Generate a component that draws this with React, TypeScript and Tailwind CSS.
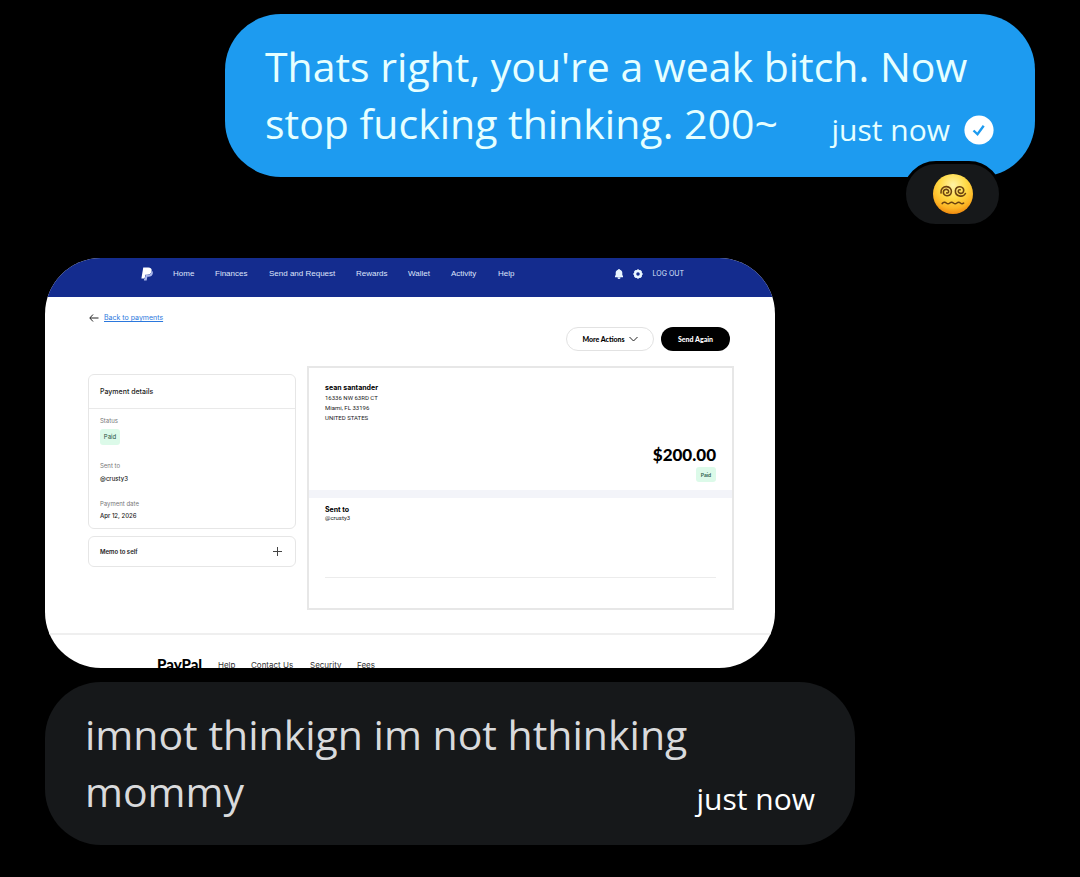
import React from "react";

const navItems = [
  { label: "Home", width: "w-[42px]" },
  { label: "Finances", width: "w-[54px]" },
  { label: "Send and Request", width: "w-[87px]" },
  { label: "Rewards", width: "w-[52px]" },
  { label: "Wallet", width: "w-[43px]" },
  { label: "Activity", width: "w-[47px]" },
  { label: "Help", width: "w-[18px]" },
];

const footerItems = [
  { label: "Help", width: "w-[33px]" },
  { label: "Contact Us", width: "w-[59px]" },
  { label: "Security", width: "w-[47px]" },
  { label: "Fees", width: "w-[30px]" },
];

function DizzyFace() {
  return (
    <svg viewBox="0 0 40 40" className="h-10 w-10" role="img" aria-label="Face with spiral eyes">
      <defs>
        <radialGradient id="face" cx="50%" cy="28%" r="72%">
          <stop offset="0" stopColor="#fff3a6" />
          <stop offset="0.45" stopColor="#ffdb48" />
          <stop offset="0.8" stopColor="#fdb524" />
          <stop offset="1" stopColor="#ef8a10" />
        </radialGradient>
      </defs>
      <circle cx="20" cy="20" r="20" fill="url(#face)" />
      <g fill="none" stroke="#6b4210" strokeWidth="1.6" strokeLinecap="round">
        <path d="M8 19c-.6-4 2.400-6.600 5.600-6.400 3 .2 5 2.600 4.800 5.200-.2 2.600-2.200 4.200-4.600 4-2.200-.2-3.600-1.800-3.400-3.800.2-1.800 1.600-2.800 3.200-2.600 1.400.2 2.200 1.200 2 2.400-.2 1-1 1.400-1.900 1.100" />
        <path d="M32.400 19.500c-1 2-3.200 2.800-5.200 2.600-3-.4-5-2.600-4.800-5.400.2-2.600 2.200-4.200 4.600-4 2.400.2 3.900 1.800 3.700 3.900-.2 1.900-1.700 3-3.300 2.800-1.400-.2-2.300-1.200-2.100-2.400.2-1 1-1.500 1.900-1.200" />
        <path d="M9.200 29.600c1.200-1.600 2.900-1.600 4.100-.6s2.300 1 3.500 0 2.400-1 3.600 0 2.300 1 3.500 0 2.300-1 3.500 0 2 1 3.200.2" />
      </g>
    </svg>
  );
}

function VerifiedCheck() {
  return (
    <svg viewBox="0 0 30 30" className="h-[30px] w-[30px]" role="img" aria-label="Seen">
      <circle cx="15" cy="15" r="14.600" fill="#fff" />
      <path d="M9.500 15.500l4 3.800 6.200-8.500" fill="none" stroke="#1d9bf0" strokeWidth="2.400" />
    </svg>
  );
}

function PaypalMark() {
  return (
    <svg viewBox="0 0 24 28" className="h-[14px] w-3" aria-hidden="true">
      <path d="M4.500 1h10c5 0 7.500 2.800 6.800 7.200-.8 5-4.300 7.400-9.300 7.400H8.700L7.200 23H.8z" fill="#fff" />
      <path d="M21.500 7c2 1.300 2.600 3.300 2.100 6-.9 4.400-4 6.600-8.500 6.600h-2.400L11.300 27H5.800l.6-3.600h1.300l1.600-7.300H12c5.300 0 8.800-3 9.500-9.100z" fill="#a9b6ea" />
    </svg>
  );
}

function BellIcon() {
  return (
    <svg viewBox="0 0 16 20" className="h-[10px] w-2" fill="#e9f6ff" aria-hidden="true">
      <path d="M8 0a2 2 0 0 1 2 1.600c3 .8 4.600 3.200 4.600 6v4.200L16 14v2.500H0V14l1.400-2.200V7.600c0-2.800 1.600-5.200 4.600-6A2 2 0 0 1 8 0zM5 17h6a3 3 0 0 1-6 0z" />
    </svg>
  );
}

function GearIcon() {
  return (
    <svg viewBox="0 0 20 20" className="h-[10px] w-[10px]" aria-hidden="true">
      <circle cx="10" cy="10" r="6" fill="none" stroke="#e9f6ff" strokeWidth="5" />
      <path d="M10 1v3M10 16v3M1 10h3M16 10h3M3.500 3.500l2 2M14.500 14.500l2 2M16.500 3.500l-2 2M3.500 16.500l2-2" stroke="#e9f6ff" strokeWidth="4" />
    </svg>
  );
}

function PaidBadge({ small }: { small?: boolean }) {
  return (
    <span
      className={
        small
          ? "flex h-[15px] w-5 items-center justify-center rounded-[3px] bg-[#dcfae9] text-[5px] font-semibold text-[#2b5f4b]"
          : "flex h-4 w-5 items-center justify-center rounded-[3px] bg-[#dcfae9] text-[6px] text-[#1f4f3d]"
      }
    >
      Paid
    </span>
  );
}

function PaymentPage() {
  return (
    <article className="flex h-[410px] w-[730px] max-w-full flex-col overflow-hidden rounded-[56px] bg-white font-[Inter,'Liberation_Sans',sans-serif] text-[#222]">
      <header className="flex h-[39px] shrink-0 items-start bg-[#142c8e] pt-2 pl-24 text-[7px] leading-4 text-[#dfe5fb]">
        <a href="#home" aria-label="PayPal" className="mr-5 flex h-4 w-3 items-center">
          <PaypalMark />
        </a>
        <nav className="flex font-['Liberation_Sans',sans-serif] text-[8px] leading-4">
          {navItems.map((item) => (
            <a key={item.label} href="#nav" className={`${item.width} shrink-0 whitespace-nowrap`}>
              {item.label}
            </a>
          ))}
        </nav>
        <div className="ml-auto flex items-center gap-[10px] pr-[91px]">
          <button aria-label="Notifications" className="flex h-4 items-center"><BellIcon /></button>
          <button aria-label="Settings" className="flex h-4 items-center"><GearIcon /></button>
          <button className="whitespace-nowrap">LOG OUT</button>
        </div>
      </header>

      <div className="flex h-[69px] shrink-0 items-start justify-between pr-[45px] pl-11">
        <a href="#payments" className="mt-4 flex items-center gap-[5px] text-[7px] leading-[10px] text-[#2b78dd]">
          <svg viewBox="0 0 20 16" className="h-2 w-[10px]" fill="none" stroke="#222" strokeWidth="2" aria-hidden="true">
            <path d="M19 8H2M8 1L1.500 8 8 15" />
          </svg>
          <span className="underline">Back to payments</span>
        </a>
        <div className="mt-[30px] flex gap-[7px] font-[Lato,sans-serif] text-[7px] font-black">
          <button className="flex h-6 w-[88px] items-center justify-center gap-1 rounded-full border border-[#e2e2e2] text-black">
            More Actions
            <svg viewBox="0 0 18 12" className="h-[6px] w-[9px]" fill="none" stroke="#222" strokeWidth="2" aria-hidden="true">
              <path d="M1 2l8 8 8-8" />
            </svg>
          </button>
          <button className="h-6 w-[69px] rounded-full bg-black text-white">Send Again</button>
        </div>
      </div>

      <main className="flex h-[267px] shrink-0 items-start gap-[11px] pr-[41px] pl-[43px]">
        <aside className="mt-2 flex w-[208px] flex-col gap-[7px] text-[6px] leading-[10px]">
          <section className="flex h-[155px] flex-col rounded-md border border-[#e6e6e6]">
            <h2 className="flex h-[34px] shrink-0 items-center border-b border-[#e9e9e9] px-[11px] text-[7px] font-medium">
              Payment details
            </h2>
            <dl className="px-[11px] pt-[7px]">
              <dt className="text-[#777]">Status</dt>
              <dd className="mt-[3px]"><PaidBadge /></dd>
              <dt className="mt-4 text-[#777]">Sent to</dt>
              <dd className="mt-[3px] font-medium">@crusty3</dd>
              <dt className="mt-[15px] text-[#777]">Payment date</dt>
              <dd className="mt-[2px] font-medium">Apr 12, 2026</dd>
            </dl>
          </section>
          <button className="flex h-[31px] items-center justify-between rounded-md border border-[#e6e6e6] pr-[13px] pl-[11px] font-semibold">
            Memo to self
            <svg viewBox="0 0 18 18" className="h-[9px] w-[9px]" stroke="#444" strokeWidth="2" aria-hidden="true">
              <path d="M9 0v18M0 9h18" />
            </svg>
          </button>
        </aside>

        <section className="flex h-[244px] min-w-0 flex-1 flex-col border-2 border-[#e7e7e7] text-[6px] leading-[10px]">
          <div className="flex h-[122px] shrink-0 flex-col px-4 pt-[15px]">
            <address className="font-[Roboto,sans-serif] text-[6px] leading-[10px] not-italic">
              <strong className="block font-[Inter,sans-serif] text-[7px] leading-[10px] font-bold text-black">sean santander</strong>
              16336 NW 63RD CT
              <br />
              Miami, FL 33196
              <br />
              UNITED STATES
            </address>
            <div className="mt-[22px] flex flex-col items-end gap-[2px]">
              <span className="font-[Lato,sans-serif] text-[17px] leading-5 font-black text-black">$200.00</span>
              <PaidBadge small />
            </div>
          </div>
          <div className="h-2 shrink-0 bg-[#f3f4f9]" />
          <div className="mx-4 h-20 shrink-0 border-b border-[#ececec] pt-2">
            <h3 className="text-[7px] leading-[8px] font-bold text-black">Sent to</h3>
            <p className="font-[Roboto,sans-serif] text-[6px] leading-[8px]">@crusty3</p>
          </div>
        </section>
      </main>

      <footer className="flex h-[35px] shrink-0 items-start overflow-hidden border-t-2 border-[#efefef] pt-[22px] pl-28 text-[8px] leading-4 text-[#333]">
        <span className="mr-4 w-[45px] font-[Lato,sans-serif] text-[15px] leading-[14px] font-black text-black">PayPal</span>
        {footerItems.map((item) => (
          <a key={item.label} href="#footer" className={`${item.width} shrink-0 whitespace-nowrap`}>
            {item.label}
          </a>
        ))}
      </footer>
    </article>
  );
}

export default function App() {
  return (
    <div className="flex min-h-screen flex-col items-start bg-black px-[45px] pt-[14px] pb-8 font-['Open_Sans',sans-serif]">
      <section className="relative mb-[81px] flex w-[810px] max-w-full items-end self-end rounded-[56px] bg-[#1d9bf0] px-10 pt-6 pb-[25px] text-[#e6ffff]">
        <p className="text-[41px] leading-[57px] whitespace-nowrap">
          Thats right, you're a weak bitch. Now
          <br />
          stop fucking thinking. 200~
        </p>
        <div className="absolute right-[41px] bottom-[27px] flex items-center gap-[14px]">
          <time className="text-[30px] leading-10">just now</time>
          <VerifiedCheck />
        </div>
        <button
          aria-label="Reaction"
          className="absolute right-[33px] -bottom-[50px] flex h-[66px] w-[99px] items-center justify-center rounded-full border-[3px] border-black bg-[#16181a]"
        >
          <DizzyFace />
        </button>
      </section>

      <PaymentPage />

      <section className="mt-[14px] flex w-[810px] max-w-full items-end justify-between rounded-[56px] bg-[#16181a] px-10 pt-6 pb-[25px]">
        <p className="text-[41px] leading-[57px] whitespace-nowrap text-[#d9dadc]">
          imnot thinkign im not hthinking
          <br />
          mommy
        </p>
        <time className="-ml-40 shrink-0 text-[30px] leading-[42px] text-white">just now</time>
      </section>
    </div>
  );
}
